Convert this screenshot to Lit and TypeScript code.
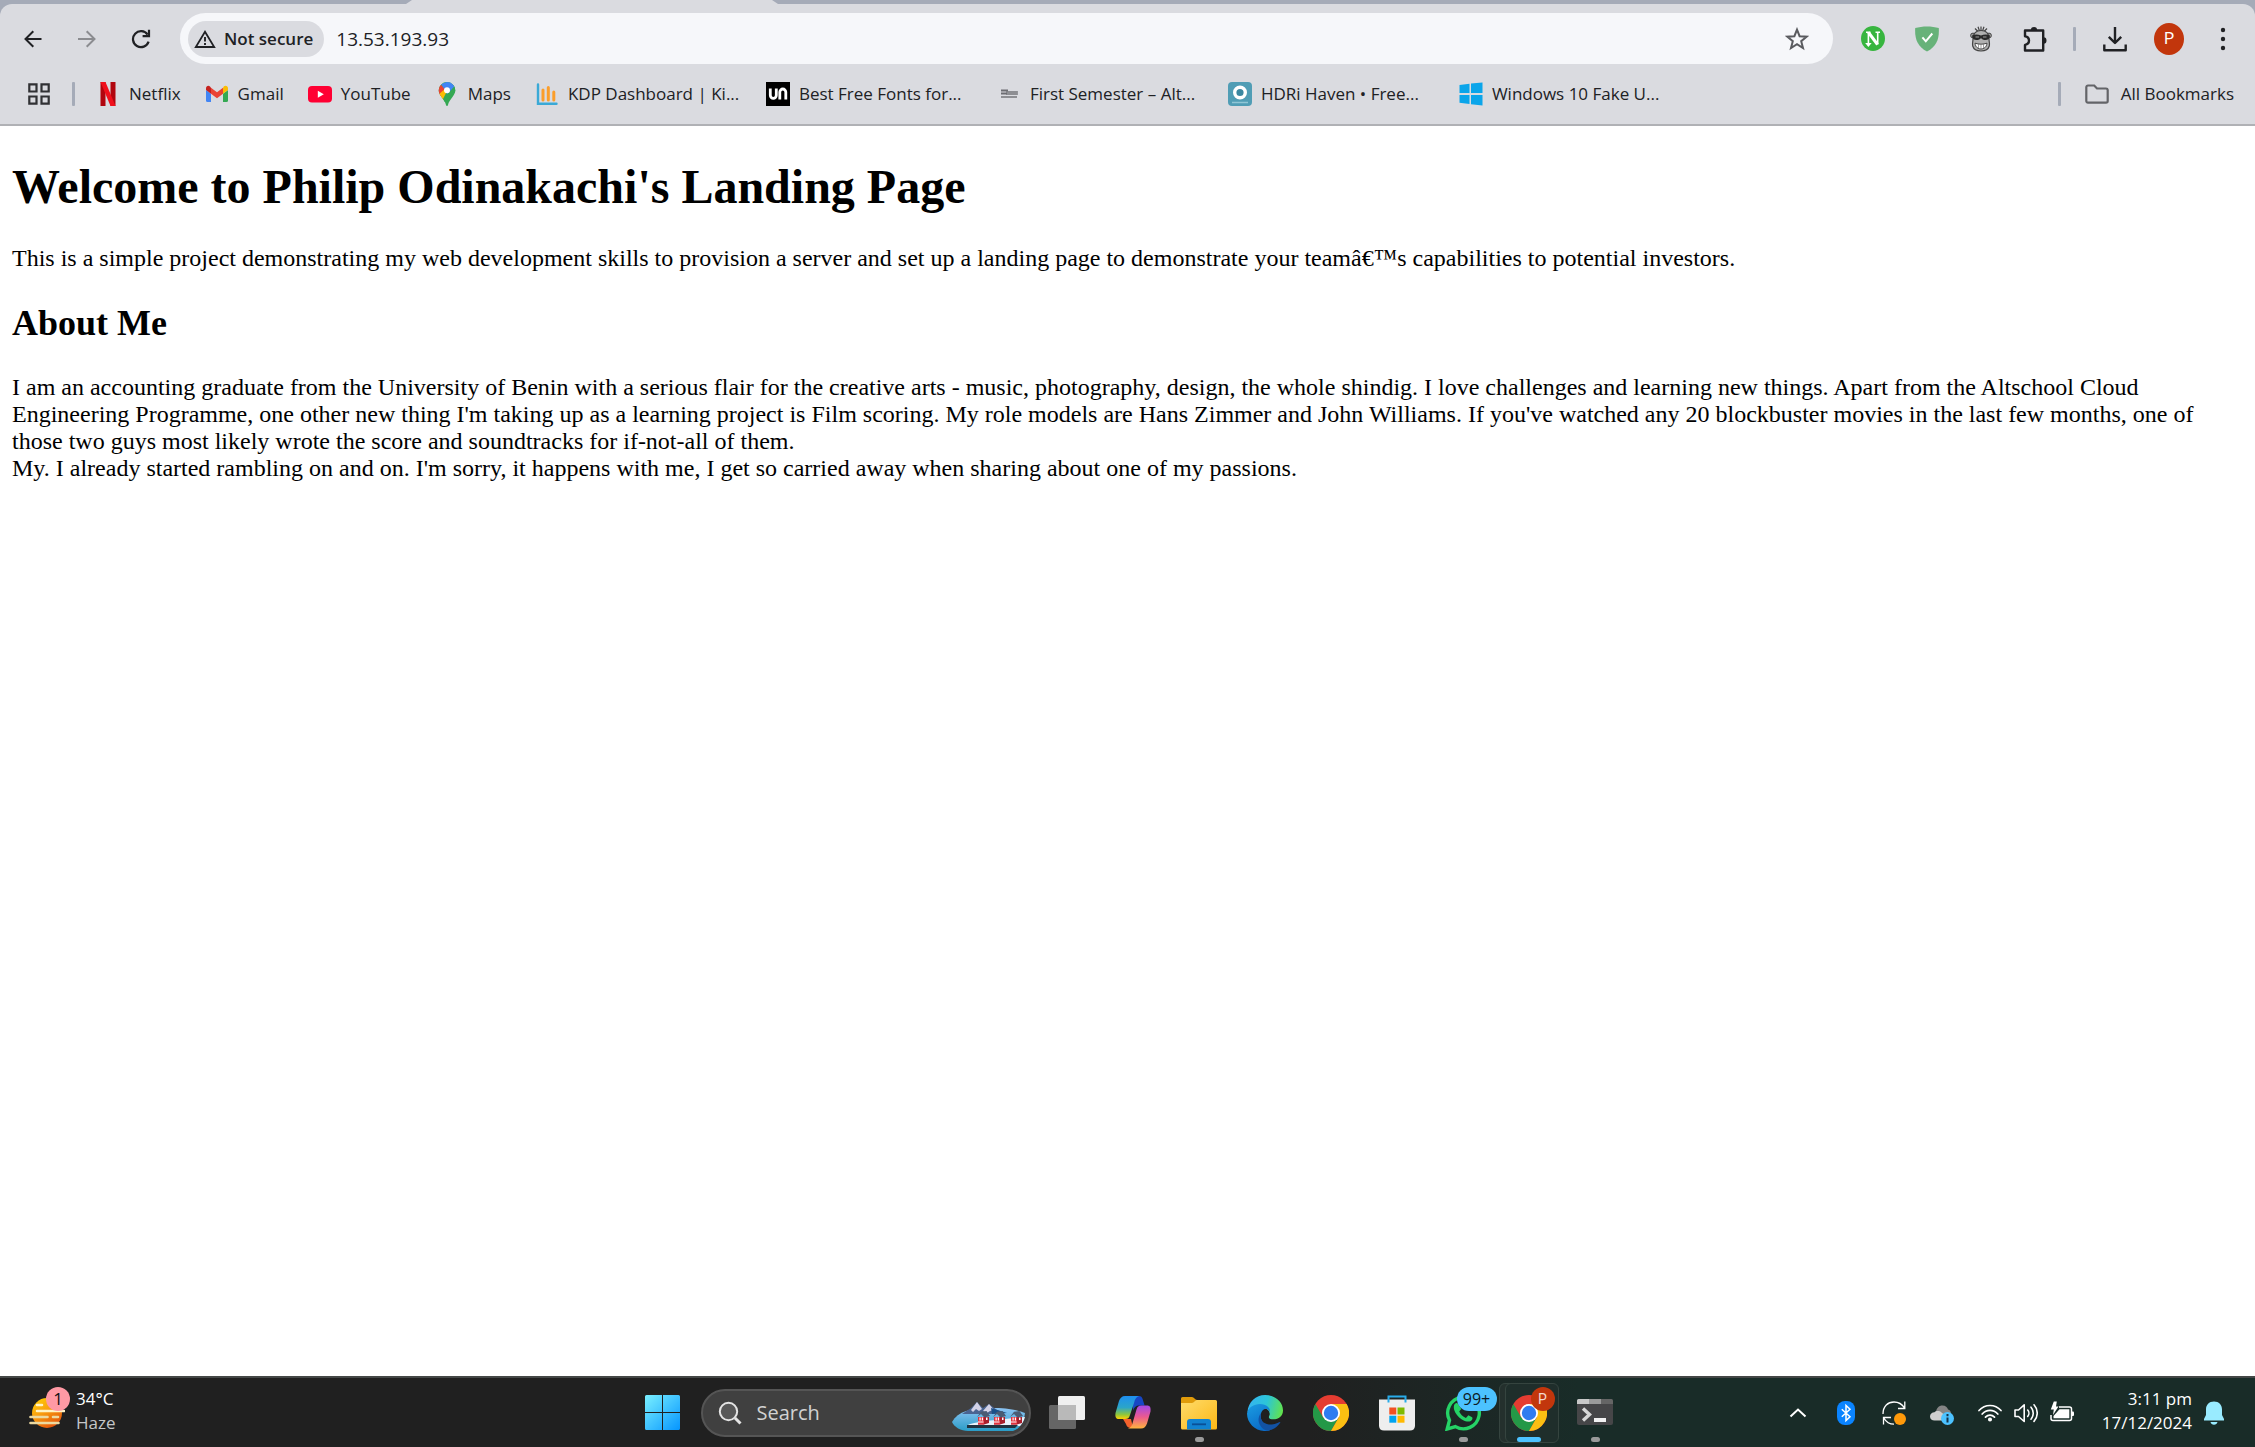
import { LitElement, html, css, svg, nothing } from "lit";
import { customElement } from "lit/decorators.js";
import { classMap } from "lit/directives/class-map.js";

const backIcon = html`<svg width="18" height="18" viewBox="0 0 18 18" fill="none" stroke="currentColor" stroke-width="2"><path d="M17.5 9H2M9.3 1.2 1.5 9l7.8 7.8" /></svg>`;
const forwardIcon = html`<svg width="18" height="18" viewBox="0 0 18 18" fill="none" stroke="currentColor" stroke-width="2"><path d="M0 9h16M8.7 1.2 16.5 9l-7.8 7.8" /></svg>`;
const reloadIcon = html`<svg width="20" height="20" viewBox="0 0 20 20" fill="none" stroke="currentColor" stroke-width="2.2"><path d="M17.6 12.6A8 8 0 1 1 16.6 5.6" /><path d="M18 .8v6.4h-6.4" /></svg>`;
const warningIcon = html`<svg width="22" height="18" viewBox="0 0 22 18"><path d="M11 1.8 20.2 17H1.8z" fill="none" stroke="#202124" stroke-width="1.8" /><path d="M11 7v4.6M11 13v2" stroke="#202124" stroke-width="1.9" /></svg>`;
const starIcon = html`<svg width="24" height="24" viewBox="0 0 24 24"><path d="m12 2.600 2.600 6.600 7 .5-5.400 4.500 1.800 6.900L12 17.200l-6 3.900 1.800-6.900L2.400 9.700l7-.5z" fill="none" stroke="#5a5b5f" stroke-width="2" /></svg>`;

const letterNIcon = html`<svg width="24" height="25" viewBox="0 0 24 25"><ellipse cx="12" cy="12.500" rx="12" ry="12.500" fill="#37b53f" /><g stroke="#fff" fill="none"><path d="M5 6.300h4.500M14.500 6.300H19M7.400 6.500v10.500M16.700 6.500v12" stroke-width="1.600" /><path d="M7.500 6.500 16.500 18.500" stroke-width="3" /></g><path d="M4.200 17h6.400l-3.200 4z" fill="#fff" /></svg>`;
const shieldIcon = html`<svg width="24" height="26" viewBox="0 0 24 26"><path d="M12 .5c4 0 8.500.6 11.800 1.600.5 11-2 17.900-11.800 23.400C2.200 20 -.3 13.100.2 2.100 3.500 1.100 8 .5 12 .5z" fill="#67b279" /><path d="m7.400 11.300 3.400 4 6.500-7.800" fill="none" stroke="#fff" stroke-width="2" /></svg>`;
const monkeyIcon = html`<svg width="24" height="26" viewBox="0 0 24 26"><path d="M9 5.500 6 2.500M10.500 5 9 .800M12 5V.500M13.500 5 15 .800M15 5.500 18 2.500" fill="none" stroke="#444" stroke-width="1.200" /><circle cx="4" cy="9.500" r="2.400" fill="#9d9d9d" stroke="#444" /><circle cx="20" cy="9.500" r="2.400" fill="#9d9d9d" stroke="#444" /><path d="M12 4.500c5 0 8 3 8 8.500 0 3 1 4.500.3 7-.9 3-4.300 5-8.300 5s-7.400-2-8.300-5C3 17.500 4 16 4 13c0-5.500 3-8.500 8-8.500z" fill="#b0b0b0" stroke="#444" stroke-width="1.200" /><path d="M3 9.500c3-1.400 6-1.200 9 0 3-1.200 6-1.400 9 0-.2 3-2 4.600-4.500 4.600-2 0-3.500-.6-4.500-2-1 1.400-2.500 2-4.500 2C5 14.100 3.200 12.500 3 9.500z" fill="#2a2a2a" /><path d="M6.500 11h3.500M14 11h3.500" stroke="#9a9a9a" /><path d="M6 17.200c4 1.300 8 1.300 12 0-.5 4-3 5.800-6 5.800s-5.500-1.800-6-5.800z" fill="#fff" stroke="#444" /><path d="M9.500 18v4M12 18.300V23M14.500 18v4" stroke="#777" stroke-width=".7" /></svg>`;
const puzzleIcon = html`<svg width="26" height="26" viewBox="0 0 26 26"><path d="M3 4.500h18.200v20H3v-5.600c2.600-.4 4-2 4-4.300s-1.400-4-4-4.400z" fill="none" stroke="#202124" stroke-width="2.400" stroke-linejoin="round" /><path d="M8.800 4.300a3.200 3.400 0 0 1 6.400 0zM21.500 11.300a3 3.200 0 0 1 0 6.400z" fill="#202124" /></svg>`;
const downloadIcon = html`<svg width="24" height="26" viewBox="0 0 24 26" fill="none" stroke="#202124" stroke-width="2.400"><path d="M12 1v15.500M5.800 10.800 12 17l6.200-6.200M1.300 18.500v5.800h21.400v-5.800" stroke-linejoin="round" /></svg>`;
const menuIcon = html`<svg width="6" height="24" viewBox="0 0 6 24" fill="#202124"><circle cx="3" cy="3" r="2.200" /><circle cx="3" cy="12" r="2.200" /><circle cx="3" cy="21" r="2.200" /></svg>`;

const appsIcon = html`<svg width="24" height="24" viewBox="0 0 24 24" fill="none" stroke="#303134" stroke-width="2.200"><path d="M2.300 2.300h7.200v7.200H2.300zM14.500 2.300h7.200v7.200h-7.200zM2.300 14.500h7.200v7.200H2.300zM14.500 14.500h7.200v7.200h-7.200z" /></svg>`;
const folderIcon = html`<svg width="24" height="20" viewBox="0 0 24 20"><path d="M3 1.500h6.200l2.800 3h9A1.700 1.700 0 0 1 22.700 6v11a1.700 1.700 0 0 1-1.700 1.700H3A1.700 1.700 0 0 1 1.300 17V3.200A1.700 1.700 0 0 1 3 1.500z" fill="none" stroke="#636468" stroke-width="2.200" /></svg>`;

const netflixIcon = html`<svg width="24" height="24" viewBox="0 0 24 24"><path d="M4.500 0h5v24h-5zM14.500 0h5v24h-5z" fill="#b1060f" /><path d="M4.500 0h5l10 24h-5z" fill="#f0101c" /></svg>`;
const gmailIcon = html`<svg width="24" height="24" viewBox="0 0 24 24"><path d="M1 8v10.500A1.500 1.500 0 0 0 2.500 20H6v-8.300z" fill="#4285f4" /><path d="M18 20h3.500a1.500 1.500 0 0 0 1.500-1.500V8l-5 3.700z" fill="#34a853" /><path d="M18 5.700v6L23 8V6.300c0-2.300-2.400-3.300-4-2z" fill="#fbbc04" /><path d="M6 11.700v-6l6 4.600 6-4.600v6l-6 4.500z" fill="#ea4335" /><path d="M1 6.300V8l5 3.700v-6L5 4.400C3.300 3 1 4 1 6.300z" fill="#c5221f" /></svg>`;
const youtubeIcon = html`<svg width="24" height="24" viewBox="0 0 24 24"><rect y="4" width="24" height="16.500" rx="4" fill="#ff0033" /><path d="m9.800 8.700 6 3.500-6 3.500z" fill="#fff" /></svg>`;
const mapsIcon = html`<svg width="24" height="24" viewBox="0 0 24 24"><clipPath id="pin"><path d="M12 0a8.300 8.300 0 0 1 8.300 8.300c0 5.700-6 8.700-7.300 14.700-.2 1.300-1.800 1.300-2 0C9.700 17 3.700 14 3.700 8.300A8.300 8.300 0 0 1 12 0z" /></clipPath><g clip-path="url(#pin)"><path d="M0 0h24v24H0z" fill="#34a853" /><path d="M0 0 5.500 2.500 12 8.500 4 15z" fill="#ea4335" /><path d="M3 13 11 6l7-3-8.500 14-2 2z" fill="#fbbc04" /><path d="M14 5 19 2.500 22 8 9 21 8 17z" fill="#34a853" /><path d="M6 2 14-1l6.500 4-8 9z" fill="#4285f4" /></g><circle cx="12" cy="8.300" r="3" fill="#fff" /></svg>`;
const kdpIcon = html`<svg width="24" height="24" viewBox="0 0 24 24" fill="none" stroke-linecap="round"><path d="M3 2.500v19.200h18.500" stroke="#3aa9d6" stroke-width="2.400" /><path d="M8 8v10M13.300 5.500V18M18.800 10v8" stroke="#fb9e2b" stroke-width="3" /></svg>`;
const unIcon = html`<svg width="24" height="24" viewBox="0 0 24 24"><path d="M0 0h24v24H0z" fill="#000" /><g fill="none" stroke="#fff" stroke-width="2.800"><path d="M4.300 6.500v6.800a3 3 0 0 0 6 0V6.500M13.800 17.500V10a3 3 0 0 1 6 0v7.500" /></g></svg>`;
const schoolIcon = html`<svg width="24" height="24" viewBox="0 0 24 24" fill="none" stroke="#6c6d72"><path d="M4 8.500h7M4 11.500h6" stroke-width="1.800" /><path d="M4 15h16M10 10h10v2H10z" stroke-width="1.800" opacity=".7" /></svg>`;
const hdriIcon = html`<svg width="24" height="24" viewBox="0 0 24 24"><rect width="24" height="24" rx="4" fill="#509db5" /><circle cx="12" cy="10.500" r="5.300" fill="#3b87a0" stroke="#fff" stroke-width="3.400" /><path d="M4 20.500h16" stroke="#8fc6d6" stroke-width="1.500" /></svg>`;
const win10Icon = html`<svg width="24" height="24" viewBox="0 0 24 24" fill="#0ba5ea"><path d="M.5 3 10.500 1.800V11H.5zM12 1.600 23.500.5V11H12zM.5 13h10v9L.5 20.800zM12 13h11.500v10.500L12 22.200z" /></svg>`;

@customElement("browser-chrome")
export class BrowserChrome extends LitElement {
  static styles = css`
    :host { display: block; background: #a5abb8; color: #202124; font: 17px/24px "Open Sans", "Noto Sans", sans-serif; }
    button { appearance: none; border: 0; padding: 0; margin: 0; background: none; color: inherit; font: inherit; display: grid; place-items: center; }
    svg { display: block; flex: none; }
    .tabstrip { height: 4px; padding-left: 412px; }
    .tab { width: 360px; height: 4px; background: #dadbe0; position: relative; }
    .tab::before, .tab::after { content: ""; position: absolute; bottom: 0; width: 6px; height: 4px; background: #dadbe0; }
    .tab::before { left: -6px; clip-path: polygon(100% 0, 100% 100%, 0 100%); }
    .tab::after { right: -6px; clip-path: polygon(0 0, 100% 100%, 0 100%); }
    .panel { background: #dadbe0; border-radius: 12px 12px 0 0; border-bottom: 2px solid #b0b1b5; }
    .toolbar { display: flex; align-items: center; height: 69px; padding: 0 5px 0 6px; }
    .slot { width: 54px; height: 48px; }
    .dim { color: #8b8c90; }
    .omnibox { flex: 1; display: flex; align-items: center; height: 51px; margin: 0 13px 0 12px; padding: 0 24px 0 8px; border-radius: 26px; background: #f6f7fa; }
    .chip { display: flex; align-items: center; gap: 8px; height: 36px; padding: 0 11px 0 6px; border-radius: 18px; background: #dadbe0; font-weight: 600; }
    .url { flex: 1; border: 0; outline: 0; padding: 0 12px; background: none; color: #202124; font: 19px/28px "Open Sans", "Noto Sans", sans-serif; }
    .rule { width: 3px; height: 24px; border-radius: 1px; background: #a5abb8; }
    .avatar { width: 30px; height: 32px; border-radius: 50%; background: #c2360c; color: #fff; font: 16px/32px Roboto, sans-serif; text-align: center; }
    .tools { display: flex; align-items: center; }
    .tools .rule { margin: 0 12px 0 11px; }
    .bookmarks { display: flex; align-items: center; height: 51px; padding: 0 21px 10px 27px; box-sizing: border-box; }
    .bookmarks > .rule { margin: 0 21px; }
    .bookmark { display: flex; align-items: center; gap: 9px; margin-right: 24px; color: inherit; text-decoration: none; white-space: nowrap; }
    .bookmark.wide { width: 231px; margin-right: 0; }
    .bookmarks > .all { display: flex; align-items: center; gap: 12px; margin-left: 3px; }
    .fill { flex: 1; }
  `;

  private bookmarks = [
    { icon: netflixIcon, label: "Netflix" },
    { icon: gmailIcon, label: "Gmail" },
    { icon: youtubeIcon, label: "YouTube" },
    { icon: mapsIcon, label: "Maps" },
    { icon: kdpIcon, label: "KDP Dashboard | Ki...", wide: true },
    { icon: unIcon, label: "Best Free Fonts for...", wide: true },
    { icon: schoolIcon, label: "First Semester – Alt...", wide: true },
    { icon: hdriIcon, label: "HDRi Haven • Free...", wide: true },
    { icon: win10Icon, label: "Windows 10 Fake U...", wide: true },
  ];

  render() {
    return html`
      <div class="tabstrip"><div class="tab"></div></div>
      <div class="panel">
        <div class="toolbar">
          <button class="slot" aria-label="Back">${backIcon}</button>
          <button class="slot dim" aria-label="Forward">${forwardIcon}</button>
          <button class="slot" aria-label="Reload">${reloadIcon}</button>
          <div class="omnibox">
            <button class="chip">${warningIcon}<span>Not secure</span></button>
            <input class="url" type="text" aria-label="Address" .value=${"13.53.193.93"} />
            <button aria-label="Bookmark this page">${starIcon}</button>
          </div>
          <div class="tools">
            <button class="slot" aria-label="Notes">${letterNIcon}</button>
            <button class="slot" aria-label="Ad blocker">${shieldIcon}</button>
            <button class="slot" aria-label="Monkey">${monkeyIcon}</button>
            <button class="slot" aria-label="Extensions">${puzzleIcon}</button>
            <div class="rule"></div>
            <button class="slot" aria-label="Downloads">${downloadIcon}</button>
            <button class="slot" aria-label="Profile"><span class="avatar">P</span></button>
            <button class="slot" aria-label="Menu">${menuIcon}</button>
          </div>
        </div>
        <nav class="bookmarks">
          <button aria-label="Apps">${appsIcon}</button>
          <div class="rule"></div>
          ${this.bookmarks.map(
            (b) => html`<a href="#" class=${classMap({ bookmark: true, wide: !!b.wide })}>${b.icon}<span>${b.label}</span></a>`,
          )}
          <div class="fill"></div>
          <div class="rule"></div>
          <button class="all">${folderIcon}<span>All Bookmarks</span></button>
        </nav>
      </div>
    `;
  }
}

@customElement("landing-page")
export class LandingPage extends LitElement {
  static styles = css`
    :host { display: flow-root; background: #fff; color: #000; padding: 0 12px; font: 24px/27px "Liberation Serif", "Times New Roman", serif; }
    h1 { margin: 33px 0 31px; font-size: 48px; line-height: 55px; }
    h2 { margin: 31px 0 30px; font-size: 36px; line-height: 41px; }
    p { margin: 0; }
  `;

  render() {
    return html`
      <h1>Welcome to Philip Odinakachi's Landing Page</h1>
      <p>This is a simple project demonstrating my web development skills to provision a server and set up a landing page to demonstrate your teamâ€™s capabilities to potential investors.</p>
      <h2>About Me</h2>
      <p>
        I am an accounting graduate from the University of Benin with a serious flair for the creative arts - music, photography, design, the whole shindig. I love challenges and learning new things. Apart from the Altschool Cloud Engineering Programme, one other new thing I'm taking up as a learning project is Film scoring. My role models are Hans Zimmer and John Williams. If you've watched any 20 blockbuster movies in the last few months, one of those two guys most likely wrote the score and soundtracks for if-not-all of them.<br />
        My. I already started rambling on and on. I'm sorry, it happens with me, I get so carried away when sharing about one of my passions.
      </p>
    `;
  }
}

const hazeIcon = html`<svg width="36" height="32" viewBox="0 0 36 32"><defs><linearGradient id="sun" x1="0" y1="0" x2=".6" y2="1"><stop offset="0" stop-color="#ffd400" /><stop offset=".5" stop-color="#f9a010" /><stop offset="1" stop-color="#e4560a" /></linearGradient></defs><circle cx="18" cy="16" r="15" fill="url(#sun)" /><g stroke-width="2.600" stroke-linecap="round" fill="none"><path d="M8 8h5M8 14h27" stroke="#fff3c4" /><path d="M1.500 20h17M24 20h5M1.500 26h28" stroke="#ecd9a0" /></g></svg>`;
const startIcon = html`<svg width="35" height="35" viewBox="0 0 35 35"><defs><linearGradient id="start" x1="0" y1="0" x2="1" y2="1"><stop offset="0" stop-color="#7af0ff" /><stop offset="1" stop-color="#0595ff" /></linearGradient></defs><path d="M1.500 0H17v17H0V1.500A1.500 1.500 0 0 1 1.500 0zM18 0h15.500A1.500 1.500 0 0 1 35 1.500V17H18zM0 18h17v17H1.500A1.500 1.500 0 0 1 0 33.500zM18 18h17v15.500a1.500 1.500 0 0 1-1.500 1.500H18z" fill="url(#start)" /></svg>`;
const searchIcon = html`<svg width="24" height="24" viewBox="0 0 24 24" fill="none" stroke="#e4e4e4"><circle cx="10.500" cy="10.500" r="8.700" stroke-width="2" fill="#585858" /><path d="m17 17 5.500 5.500" stroke-width="3" /></svg>`;
const house = (x: number) => svg`<g transform="translate(${x} 9)"><path d="M0 6h11v6l-5 1.500H0z" fill="#a81f2c" /><path d="M0 6h6v7.500H0z" fill="#e0313c" /><path d="M-1 6 3 .800 8.500 0 12 5 6.500 6.500 3 3z" fill="#4a5c74" /><path d="M1.500 6.500h1.200v3H1.500zM3.800 6.500H5v3H3.800zM0 10.500h5.500v1H0zM8 6.500h1.500v2.500H8z" fill="#fff" /></g>`;
const sceneIcon = html`<svg width="76" height="30" viewBox="0 0 76 30"><defs><linearGradient id="lake" x1="0" y1="0" x2="0" y2="1"><stop offset="0" stop-color="#8cc4f4" /><stop offset="1" stop-color="#2a9cc6" /></linearGradient></defs><path d="M1 20C7 9 20 6 40 6c14 0 24 1 34 5-1 8-4 15-12 18H17C10 29 3 25 1 20z" fill="url(#lake)" /><path d="M11 12 20 6 26 0l6 6 6-4 8 6 8 3-14 1z" fill="#4a6491" /><path d="m20 8 6-8 5 7-3 2-3-2-3 3zM32 9l6-7 5 6-4 1-3 2z" fill="#d3d2e6" /><path d="M40 6l16 5-15 1z" fill="#1b5088" /><path d="M17 23c8-4 30-5 57-8-1 4-3 7-5 9H17z" fill="#e9f2fa" /><path d="M16 23h51l-3 3H16z" fill="#20323f" />${house(27)}${house(43)}${house(60)}</svg>`;
const taskViewIcon = html`<svg width="36" height="36" viewBox="0 0 36 36"><rect x="9" y="1" width="27" height="24" rx="1.500" fill="#efefef" /><rect y="10" width="27" height="24" rx="1.500" fill="#8b8b8b" opacity=".65" /><path d="M9 10h18v15H9z" fill="#b9b9b9" /></svg>`;
const copilotIcon = html`<svg width="36" height="36" viewBox="0 0 36 36"><defs><linearGradient id="cpa" x1="0" y1="0" x2="0" y2="1"><stop offset="0" stop-color="#1e8ff0" /><stop offset=".5" stop-color="#2ba5c8" /><stop offset=".8" stop-color="#8cc63f" /><stop offset="1" stop-color="#ffd000" /></linearGradient><linearGradient id="cpb" x1="0" y1="0" x2="0" y2="1"><stop offset="0" stop-color="#a348e8" /><stop offset=".5" stop-color="#ec5a8e" /><stop offset="1" stop-color="#ffb43d" /></linearGradient></defs><path d="M18 1h6c2 0 3 1 3.600 3l2 6.500H24c-3 0-5 2-6 5z" fill="#1746c4" /><path d="M8 24h8l2 9c-5 0-6-1-7-4z" fill="#f4622c" /><path d="M10 1h14c-3 1-4 3-5 7l-4 12c-1 3-2 4-5 4H4c-3 0-4-2-3.500-6L4 6c1-3 3-5 6-5z" fill="url(#cpa)" /><path d="M26 33.500H13c3-1 4-3 5-7l3.500-12c1-3 2-4 5-4H32c3 0 4 2 3.500 6L32 28.500c-1 3-3 5-6 5z" fill="url(#cpb)" /></svg>`;
const explorerIcon = html`<svg width="36" height="36" viewBox="0 0 36 36"><defs><linearGradient id="fold" x1="0" y1="0" x2="1" y2="1"><stop offset="0" stop-color="#ffdc6b" /><stop offset="1" stop-color="#fcb715" /></linearGradient></defs><path d="M0 3.500A1.500 1.500 0 0 1 1.500 2H11c2 0 3 3 5 3h6v8H0z" fill="#e09b0a" /><path d="M0 8h11c2 0 3-3 5-3h18.500A1.500 1.500 0 0 1 36 6.500V33a1.500 1.500 0 0 1-1.500 1.500h-33A1.500 1.500 0 0 1 0 33z" fill="url(#fold)" /><path d="M6 34.500V27a3 3 0 0 1 3-3h18a3 3 0 0 1 3 3v7.500z" fill="#1182d0" /><path d="M11 29.300h14" stroke="#0a4f96" stroke-width="1.800" /></svg>`;
const edgeIcon = html`<svg width="36" height="36" viewBox="0 0 36 36"><defs><linearGradient id="ea" x1="0" y1=".4" x2="1" y2=".6"><stop offset="0" stop-color="#35b4f0" /><stop offset=".5" stop-color="#2cc5d8" /><stop offset="1" stop-color="#62e34c" /></linearGradient><linearGradient id="eb" x1="0" y1="0" x2=".5" y2="1"><stop offset="0" stop-color="#1b9de2" /><stop offset="1" stop-color="#0a6cc8" /></linearGradient></defs><path d="M.5 17C1 7 9 0 18 0c10 0 18 7 18 15.500 0 5.500-4.500 9-9.500 9-4 0-5.500-1.500-4.500-3.500 1.500-3 0-7-5-8C10 12 4 12 .5 17z" fill="url(#ea)" /><path d="M0 18.500C1 12.500 7 9 13 9c6.500 0 10.500 4 10 8-1-2.500-3-3.500-5-3-5 1.500-5.500 9-2 14 2.500 3.500 5 6 7 7.200C21 36 18.500 36 17 36 8 35.500 0 28 0 18.500z" fill="url(#eb)" /><path d="M14 18c-2 8 4 12 11 11.500 4-.3 6-2.500 8.500-2.500C31 32 25 35.500 20 35.800 12 33 9 24 14 18z" fill="#1252a4" /><path d="M18 14.500c-4 1.500-5 7-1.500 10.500 4 4 11 4 17 1.500-2-1-5-2-7-2-4 0-5.500-1.500-4.500-3.500 1.200-2.500-.5-6.500-4-6.500z" fill="#202020" /></svg>`;
const chromeIcon = html`<svg width="36" height="36" viewBox="0 0 36 36"><circle cx="18" cy="18" r="18" fill="#e53c31" /><path d="M2.400 9 10.200 22.500 18 27l7.800-4.500L18 36A18 18 0 0 1 2.400 9z" fill="#249847" /><path d="M18 9h15.600A18 18 0 0 1 18 36l7.800-13.500z" fill="#fbbf12" /><circle cx="18" cy="18" r="9" fill="#fff" /><circle cx="18" cy="18" r="7.200" fill="#2f7cf0" /></svg>`;
const storeIcon = html`<svg width="36" height="36" viewBox="0 0 36 36"><path d="M0 4.500h36V31a5 5 0 0 1-5 4.500H5A5 5 0 0 1 0 31z" fill="#eeeeee" /><path d="M9.500 7.500v-6h17v6" fill="none" stroke="#29abe9" stroke-width="2" /><path d="M10.300 12.500h7v7h-7z" fill="#f25022" /><path d="M18.500 12.500h7v7h-7z" fill="#7fba00" /><path d="M10.300 20.700h7v7h-7z" fill="#00a4ef" /><path d="M18.500 20.700h7v7h-7z" fill="#ffb900" /></svg>`;
const whatsappIcon = html`<svg width="36" height="36" viewBox="0 0 36 36"><path d="m2.200 34 2.300-8.700A15.800 15.800 0 1 1 10.500 31.600z" fill="none" stroke="#25d366" stroke-width="3.400" /><path d="M13 9c-.8-1.800-3.400-1-4 1.500-1.700 7 8 17 15.500 16 2.500-.4 3.600-3 2.600-4.200l-3.700-2-2.500 2.600c-3-1-5.800-4-6.700-6.400l2-2.500z" fill="#25d366" /></svg>`;
const terminalIcon = html`<svg width="36" height="36" viewBox="0 0 36 36"><path d="M0 9h36v19a2 2 0 0 1-2 2H2a2 2 0 0 1-2-2z" fill="#464648" /><path d="M1.500 4H12v5H0V5.500A1.500 1.500 0 0 1 1.500 4z" fill="#c8c8c8" /><path d="M12 4h12v5H12z" fill="#9a9a9a" /><path d="M24 4h10.500A1.500 1.500 0 0 1 36 5.500V9H24z" fill="#656565" /><path d="m6 13.500 6.500 6L6 25.500" fill="none" stroke="#d8d8d8" stroke-width="3.400" /><path d="M17 23h12v4H17z" fill="#f2f2f2" /></svg>`;

const chevronIcon = html`<svg width="18" height="24" viewBox="0 0 18 24"><path d="m1.500 15.500 7.500-7 7.500 7" fill="none" stroke="#fff" stroke-width="2" /></svg>`;
const bluetoothIcon = html`<svg width="18" height="24" viewBox="0 0 18 24"><rect width="18" height="24" rx="8" fill="#0a84ff" /><path d="m4.800 8.200 8.200 7.600-4 3.700v-15l4 3.700-8.200 7.600" fill="none" stroke="#fff" stroke-width="1.500" /></svg>`;
const syncIcon = html`<svg width="24" height="24" viewBox="0 0 24 24" fill="none"><path d="M1 13C1 5 6 1 12 1c5 0 8 2 10.500 6M22.800.5V7.500H16M12 23.200c-4 0-7.500-1.500-10-6M1.500 23.500v-7H9" stroke="#fff" stroke-width="1.300" /><circle cx="18" cy="18" r="6" fill="#ff9a0a" /></svg>`;
const cloudIcon = html`<svg width="24" height="24" viewBox="0 0 24 24"><path d="M6 12c0-5 3-7.500 6.500-7.500 3 0 5 2 5.500 4 2 .3 3 2 3 4.500l-6 3H9z" fill="#858585" /><path d="M4.500 19.500C2 19.500 0 18 0 15.500s2-4.300 4.500-4.300c1-1.500 5-2 7 .3l5 4v4z" fill="#cfcfcf" /><circle cx="17.500" cy="17.500" r="6.500" fill="#4cc2ff" /><path d="M17.500 16.500v5M17.500 13v2.200" stroke="#15324a" stroke-width="2" /></svg>`;
const wifiIcon = html`<svg width="24" height="24" viewBox="0 0 24 24" fill="none" stroke="#fff" stroke-width="1.700" stroke-linecap="round"><path d="M1 9.500c6-6.700 16-6.700 22 0M4.200 13c4.400-4.800 11.200-4.800 15.600 0M7.500 16.200c2.600-2.700 6.400-2.700 9 0" /><circle cx="12" cy="18.500" r="1.200" fill="#fff" /></svg>`;
const volumeIcon = html`<svg width="24" height="24" viewBox="0 0 24 24" fill="none" stroke="#fff" stroke-width="1.600" stroke-linecap="round" stroke-linejoin="round"><path d="M1 9v6.500h3.500l5.700 5V3.800L4.500 9zM13.700 9c1.600 1.800 1.600 4.700 0 6.500M17 6.200c3 3.400 3 8.800 0 12M20 3.800c4.300 4.700 4.300 12 0 16.600" /></svg>`;
const batteryIcon = html`<svg width="24" height="24" viewBox="0 0 24 24"><path d="M9 6h10.500a2 2 0 0 1 2 2v9.500a2 2 0 0 1-2 2H3a2 2 0 0 1-2-2V14" fill="none" stroke="#fff" stroke-width="1.500" /><path d="M9.500 8.300h9.800v9H3.500V15z" fill="#fff" /><path d="M22 10.500h1a1 1 0 0 1 1 1V14a1 1 0 0 1-1 1h-1z" fill="#fff" /><path d="M3.800.5h3L6 5.500h2.500L3 14l.8-5.500H.8z" fill="#fff" /></svg>`;
const bellIcon = html`<svg width="20" height="24" viewBox="0 0 20 24" fill="#99ebff"><path d="M10 .5c5 0 8 3.500 8 8V14l2 4v1.500H0V18l2-4V8.500c0-4.500 3-8 8-8zM6.500 21h7c-.5 1.800-1.700 2.700-3.500 2.700S7 22.800 6.500 21z" /></svg>`;

@customElement("task-bar")
export class TaskBar extends LitElement {
  static styles = css`
    :host { display: grid; grid-template-columns: 1fr auto 1fr; align-items: center; height: 69px; border-top: 2px solid #444746; color: #fff; background: linear-gradient(90deg, #202020 58%, #192c28 70%); font: 17px/24px "Open Sans", "Noto Sans", sans-serif; }
    button { appearance: none; border: 0; padding: 0; margin: 0; background: none; color: inherit; font: inherit; }
    svg { display: block; flex: none; }
    .weather { display: flex; align-items: center; justify-self: start; gap: 11px; margin-left: 29px; text-align: left; }
    .weather-icon { position: relative; }
    .count { position: absolute; left: 17px; top: -10px; width: 24px; height: 24px; border-radius: 12px; background: #ff99a4; color: #111; text-align: center; }
    .lines { display: flex; flex-direction: column; padding-bottom: 3px; }
    .muted { color: #c4c6c8; }
    .center { display: flex; align-items: center; padding-left: 2px; }
    .app { position: relative; display: grid; place-items: center; width: 66px; height: 68px; }
    .search { display: flex; align-items: center; gap: 15px; box-sizing: border-box; width: 330px; height: 48px; margin: 0 3px 0 5px; padding: 0 2px 0 15px; border: 2px solid #555; border-radius: 24px; background: #404040; }
    .query { flex: 1; min-width: 0; border: 0; outline: 0; padding: 0; background: none; color: #fff; font: 20px/28px "Open Sans", "Noto Sans", sans-serif; }
    .query::placeholder { color: #d2d2d2; opacity: 1; }
    .scene { padding-top: 8px; }
    .app::after { content: ""; position: absolute; bottom: 5px; left: 29px; width: 9px; height: 5px; border-radius: 3px; background: transparent; }
    .running::after { background: #9a9a9a; }
    .active::after { left: 21px; width: 24px; background: #4cc2ff; }
    .active::before, .stack { content: ""; position: absolute; top: 4px; left: 3px; box-sizing: border-box; width: 54px; height: 60px; border: 1px solid #35443f; border-radius: 6px; background: #24302d; }
    .stack { left: 9px; background: #1f2e2b; }
    .app svg { position: relative; }
    .badge { position: absolute; z-index: 1; top: 8px; left: 27px; width: 40px; height: 24px; border-radius: 12px; background: #4cc2ff; color: #0c1a24; font-size: 16px; text-align: center; }
    .person { left: 35px; width: 24px; border-radius: 12px; background: #c2360c; color: #f3d9cf; font: 14px/24px Roboto, sans-serif; }
    .tray { display: flex; align-items: center; justify-self: end; margin-right: 31px; }
    .tray button { display: flex; align-items: center; justify-content: center; }
    .tray .slot { width: 48px; }
    .tray .status { gap: 12px; margin-left: 12px; }
    .tray .clock { flex-direction: column; width: 106px; margin: 0 12px; padding-bottom: 3px; }
    .clock span { align-self: flex-end; }
  `;

  private apps = [
    { name: "Task view", icon: taskViewIcon },
    { name: "Copilot", icon: copilotIcon },
    { name: "File Explorer", icon: explorerIcon, running: true },
    { name: "Edge", icon: edgeIcon },
    { name: "Chrome", icon: chromeIcon },
    { name: "Store", icon: storeIcon },
    { name: "WhatsApp", icon: whatsappIcon, running: true, badge: "99+" },
    { name: "Chrome window", icon: chromeIcon, running: true, active: true, badge: "P" },
    { name: "Terminal", icon: terminalIcon, running: true },
  ];

  render() {
    return html`
      <button class="weather">
        <span class="weather-icon">${hazeIcon}<span class="count">1</span></span>
        <span class="lines"><span>34°C</span><span class="muted">Haze</span></span>
      </button>
      <div class="center">
        <button class="app" aria-label="Start">${startIcon}</button>
        <label class="search">
          ${searchIcon}
          <input class="query" type="text" placeholder="Search" aria-label="Search" />
          <span class="scene">${sceneIcon}</span>
        </label>
        ${this.apps.map(
          (a) => html`<button aria-label=${a.name} class=${classMap({ app: true, running: !!a.running, active: !!a.active })}>
            ${a.active ? html`<span class="stack"></span>` : nothing}
            ${a.icon}
            ${a.badge ? html`<span class=${classMap({ badge: true, person: !!a.active })}>${a.badge}</span>` : nothing}
          </button>`,
        )}
      </div>
      <div class="tray">
        <button class="slot" aria-label="Hidden icons">${chevronIcon}</button>
        <button class="slot" aria-label="Bluetooth">${bluetoothIcon}</button>
        <button class="slot" aria-label="Sync">${syncIcon}</button>
        <button class="slot" aria-label="Cloud storage">${cloudIcon}</button>
        <button class="status" aria-label="Network, volume and battery">${wifiIcon}${volumeIcon}${batteryIcon}</button>
        <button class="clock"><span>3:11 pm</span><span>17/12/2024</span></button>
        <button aria-label="Notifications">${bellIcon}</button>
      </div>
    `;
  }
}

@customElement("app-root")
export class AppRoot extends LitElement {
  static styles = css`
    :host { display: flex; flex-direction: column; min-height: 100vh; background: #fff; }
    landing-page { flex: 1; }
  `;

  render() {
    return html`<browser-chrome></browser-chrome><landing-page></landing-page><task-bar></task-bar>`;
  }
}
